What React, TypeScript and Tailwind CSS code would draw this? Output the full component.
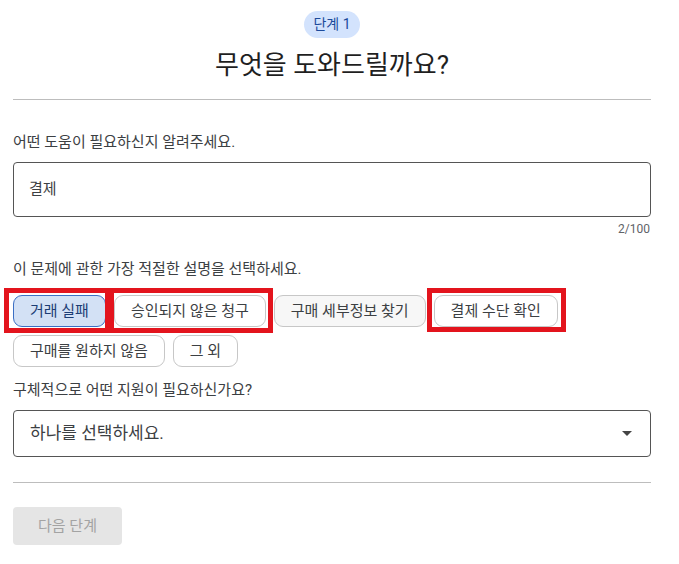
import React from "react";

const font = { fontFamily: 'Roboto, "Noto Sans CJK KR", sans-serif' };

function Chip({
  label,
  selected,
  muted,
  box,
}: {
  label: string;
  selected?: boolean;
  muted?: boolean;
  box?: string;
}) {
  return (
    <div className="relative">
      <button
        className={
          "h-8 px-4 rounded-[9px] border text-[15px] leading-none whitespace-nowrap " +
          (selected
            ? "bg-[#d3e1f5] border-[#3b6fc4] text-[#1c3d74]"
            : muted
            ? "bg-[#f7f7f7] border-[#c7c7c7] text-[#3c4043]"
            : "bg-white border-[#c7c7c7] text-[#3c4043]")
        }
      >
        {label}
      </button>
      {box ? (
        <span className={"pointer-events-none absolute border-[5px] border-[#e3141d] " + box} />
      ) : null}
    </div>
  );
}

export default function App() {
  return (
    <div className="w-[679px] h-[564px] bg-white overflow-hidden" style={font}>
      <div className="ml-[13px] w-[638px] flex flex-col pt-[11px]">
        <div className="flex justify-center">
          <span className="h-[27px] px-[9px] rounded-full bg-[#d3e3fd] text-[#1b4a9b] text-[14px] flex items-center">
            단계 1
          </span>
        </div>
        <h1 className="mt-[11px] h-8 leading-8 text-center text-[26px] text-[#1f1f1f]">
          무엇을 도와드릴까요?
        </h1>
        <div className="mt-[18px] border-t border-[#bdbdbd]" />

        <p className="mt-[32px] h-5 leading-5 text-[15px] text-[#3c4043]">
          어떤 도움이 필요하신지 알려주세요.
        </p>
        <div className="mt-[10px] h-[55px] rounded-[4px] border border-[#555] flex items-center pl-[15px] text-[15px] text-[#3c4043]">
          결제
        </div>
        <div className="mt-[4px] h-4 leading-4 text-right text-[12px] text-[#5f6368] pr-px">
          2/100
        </div>

        <p className="mt-[22px] h-5 leading-5 text-[15px] text-[#3c4043]">
          이 문제에 관한 가장 적절한 설명을 선택하세요.
        </p>
        <div className="mt-[16px] flex flex-wrap gap-x-2 gap-y-2">
          <Chip label="거래 실패" selected box="-left-[9px] -right-[4px] -top-[7px] -bottom-[6px]" />
          <Chip label="승인되지 않은 청구" box="-left-[5px] -right-[7px] -top-[7px] -bottom-[6px]" />
          <Chip label="구매 세부정보 찾기" muted />
          <Chip label="결제 수단 확인" box="-left-[7px] -right-[8px] -top-[7px] -bottom-[5px]" />
          <Chip label="구매를 원하지 않음" />
          <Chip label="그 외" />
        </div>

        <p className="mt-[13px] h-5 leading-5 text-[15px] text-[#3c4043]">
          구체적으로 어떤 지원이 필요하신가요?
        </p>
        <div className="mt-[10px] h-[47px] rounded-[4px] border border-[#555] flex items-center justify-between pl-4 pr-[18px]">
          <span className="text-[17px] text-[#3c4043]">하나를 선택하세요.</span>
          <svg width="10" height="5" viewBox="0 0 10 5">
            <path d="M0 0 L10 0 L5 5 Z" fill="#444" />
          </svg>
        </div>

        <div className="mt-[25px] border-t border-[#bdbdbd]" />
        <div className="mt-[24px]">
          <button className="h-[38px] w-[109px] rounded-[4px] bg-[#e5e5e5] text-[#a3a3a3] text-[15px]">
            다음 단계
          </button>
        </div>
      </div>
    </div>
  );
}
